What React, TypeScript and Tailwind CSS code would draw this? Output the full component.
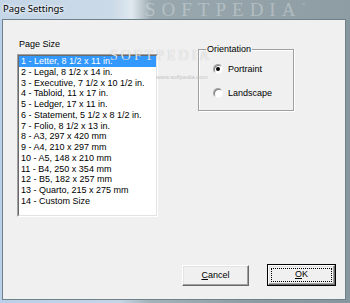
import React from "react";

const SIZES = [
  "1 - Letter, 8 1/2 x 11 in.",
  "2 - Legal, 8 1/2 x 14 in.",
  "3 - Executive, 7 1/2 x 10 1/2 in.",
  "4 - Tabloid, 11 x 17 in.",
  "5 - Ledger, 17 x 11 in.",
  "6 - Statement, 5 1/2 x 8 1/2 in.",
  "7 - Folio, 8 1/2 x 13 in.",
  "8 - A3, 297 x 420 mm",
  "9 - A4, 210 x 297 mm",
  "10 - A5, 148 x 210 mm",
  "11 - B4, 250 x 354 mm",
  "12 - B5, 182 x 257 mm",
  "13 - Quarto, 215 x 275 mm",
  "14 - Custom Size",
];

function Radio({ label, checked }: { label: string; checked?: boolean }) {
  return (
    <div className="flex h-[10px] items-center gap-[5px]">
      <span className="relative flex h-[10px] w-[10px] items-center justify-center rounded-full border border-[#a0a0a0] border-b-[#f8f8f8] border-r-[#f8f8f8] bg-white shadow-[inset_1px_1px_0_#808080]">
        {checked && <span className="h-[4px] w-[4px] rounded-full bg-black" />}
      </span>
      <span className="leading-[10px]">{label}</span>
    </div>
  );
}

export default function App() {
  const [selected, setSelected] = React.useState(0);
  const [portrait, setPortrait] = React.useState(true);

  return (
    <div className="relative flex h-[303px] w-[350px] flex-col overflow-hidden bg-[linear-gradient(to_right,#b9d0e8_0px,#c4d5e6_120px,#a3b3b9_150px,#8a9ba1_260px,#8797a0_350px)] font-['Liberation_Sans',Arial,sans-serif] text-[9px] text-black">
      {/* Title bar */}
      <div className="relative h-[20px] shrink-0 bg-[linear-gradient(to_right,#c3d5e7_0px,#cbdae8_112px,#dfe8ee_132px,#98a8ae_152px,#8d9da3_350px)]">
        <div className="absolute left-[145px] top-0 whitespace-nowrap font-['Liberation_Serif',serif] text-[19px] leading-[20px] tracking-[6px] text-white/30">
          SOFTPEDIA<span className="align-top text-[6px] leading-[8px] tracking-normal">®</span>
        </div>
        <div className="relative flex h-[19px] items-center pl-[3px] font-['Noto_Sans',sans-serif] text-[9.5px] [text-shadow:0_0_5px_#fff,0_0_3px_#fff]">
          Page Settings
        </div>
      </div>

      {/* Client area */}
      <div className="relative ml-[3px] h-[279px] w-[342px] bg-[#f0f0f0] shadow-[0_0_0_1px_#6e8089]">
        <div className="flex pl-[14px] pt-[19px]">
          {/* Page size list */}
          <div className="w-[141px]">
            <div className="h-[15px] pl-[2px] leading-[11px]">Page Size</div>
            <div className="h-[163px] border border-[#a0a0a0] border-b-white border-r-white">
              <div className="h-full border border-[#696969] border-b-[#e3e3e3] border-r-[#e3e3e3] bg-white">
                {SIZES.map((s, i) => (
                  <div
                    key={s}
                    onClick={() => setSelected(i)}
                    className={
                      i === selected
                        ? "h-[10.75px] whitespace-nowrap bg-[#3399ff] px-[2px] leading-[10.75px] text-white"
                        : "h-[10.75px] whitespace-nowrap px-[2px] leading-[10.75px]"
                    }
                  >
                    {s}
                  </div>
                ))}
              </div>
            </div>
          </div>

          {/* Orientation group */}
          <div className="relative ml-[40px] mt-[10px] h-[62px] w-[96px] border border-[#a0a0a0] shadow-[inset_1px_1px_0_#fff,1px_1px_0_#fff]">
            <span className="absolute left-[7px] top-[-6px] bg-[#f0f0f0] px-[1px] leading-[11px]">Orientation</span>
            <div className="flex flex-col gap-[14px] pl-[14px] pt-[14px]">
              <div onClick={() => setPortrait(true)}>
                <Radio label="Portraint" checked={portrait} />
              </div>
              <div onClick={() => setPortrait(false)}>
                <Radio label="Landscape" checked={!portrait} />
              </div>
            </div>
          </div>
        </div>

        {/* Buttons */}
        <div className="mt-[47px] flex items-start justify-end gap-[18px] pr-[9px]">
          <button className="mt-[1px] flex h-[21px] w-[67px] items-center justify-center border border-white border-b-[#696969] border-r-[#696969] bg-[#f0f0f0] shadow-[inset_-1px_-1px_0_#a0a0a0,inset_1px_1px_0_#e3e3e3]">
            <span>
              <span className="underline">C</span>ancel
            </span>
          </button>
          <button className="h-[22px] w-[69px] border border-black bg-[#f0f0f0]">
            <div className="relative flex h-full w-full items-center justify-center border border-white border-b-[#696969] border-r-[#696969] shadow-[inset_-1px_-1px_0_#a0a0a0,inset_1px_1px_0_#e3e3e3]">
              <div className="absolute inset-[2px] border border-dotted border-black" />
              <span>
                <span className="underline">O</span>K
              </span>
            </div>
          </button>
        </div>

        {/* Watermark */}
        <div className="pointer-events-none absolute left-[107px] top-[29px] font-['Liberation_Serif',serif] text-[14px] leading-[14px] tracking-[3px] text-white/80 [text-shadow:0_0_1px_rgba(0,0,0,0.3)]">
          SOFTPEDIA
        </div>
        <div className="pointer-events-none absolute left-[153px] top-[54px] text-[6px] leading-[6px] text-[#c4c4c4]">
          www.softpedia.com
        </div>
      </div>
    </div>
  );
}
